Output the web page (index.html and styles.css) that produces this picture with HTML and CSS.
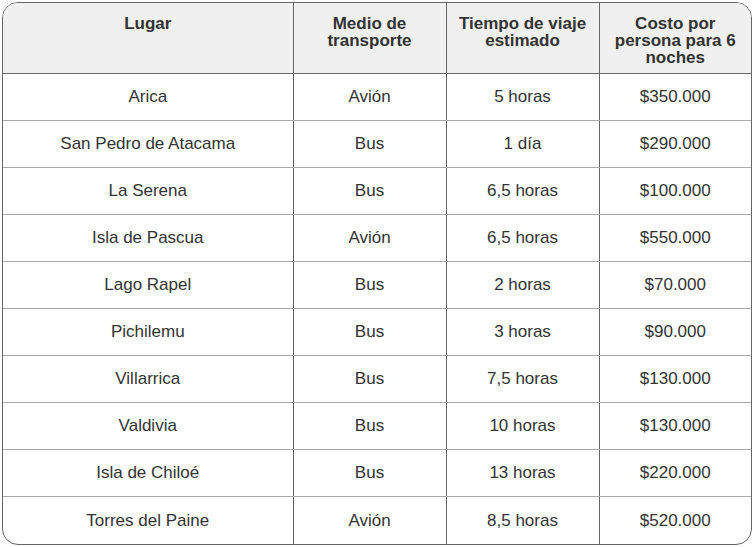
FILE: index.html
```html
<!DOCTYPE html>
<html lang="es">
<head>
<meta charset="utf-8">
<link rel="stylesheet" href="styles.css">
</head>
<body>
<div class="frame">
<table class="trips">
<colgroup>
<col class="c1"><col class="c2"><col class="c3"><col class="c4">
</colgroup>
<thead>
<tr><th>Lugar</th><th>Medio de<br>transporte</th><th>Tiempo de viaje<br>estimado</th><th>Costo por<br>persona para 6<br>noches</th></tr>
</thead>
<tbody>
<tr><td>Arica</td><td>Avión</td><td>5 horas</td><td>$350.000</td></tr>
<tr><td>San Pedro de Atacama</td><td>Bus</td><td>1 día</td><td>$290.000</td></tr>
<tr><td>La Serena</td><td>Bus</td><td>6,5 horas</td><td>$100.000</td></tr>
<tr><td>Isla de Pascua</td><td>Avión</td><td>6,5 horas</td><td>$550.000</td></tr>
<tr><td>Lago Rapel</td><td>Bus</td><td>2 horas</td><td>$70.000</td></tr>
<tr><td>Pichilemu</td><td>Bus</td><td>3 horas</td><td>$90.000</td></tr>
<tr><td>Villarrica</td><td>Bus</td><td>7,5 horas</td><td>$130.000</td></tr>
<tr><td>Valdivia</td><td>Bus</td><td>10 horas</td><td>$130.000</td></tr>
<tr><td>Isla de Chiloé</td><td>Bus</td><td>13 horas</td><td>$220.000</td></tr>
<tr class="last"><td>Torres del Paine</td><td>Avión</td><td>8,5 horas</td><td>$520.000</td></tr>
</tbody>
</table>
</div>
</body>
</html>
```
FILE: styles.css
```css
html, body { margin: 0; padding: 0; background: #fff; }
body { padding: 2px; font-family: "Liberation Sans", Arial, sans-serif; color: #333; }
.frame {
  width: 748px;
  height: 541px;
  border: 1px solid #666;
  border-radius: 16px;
  overflow: hidden;
}
.trips {
  width: 748px;
  height: 541px;
  border-collapse: collapse;
  table-layout: fixed;
  font-size: 17px;
}
.c1 { width: 290px; }
.c2 { width: 153px; }
.c3 { width: 153px; }
.c4 { width: 152px; }
.trips th, .trips td {
  text-align: center;
  padding: 0 2px;
  border-left: 1px solid #666;
}
.trips th:first-child, .trips td:first-child { border-left: none; }
.trips thead th {
  background: #f0f0f0;
  font-weight: bold;
  font-size: 17px;
  line-height: 17px;
  height: 70px;
  vertical-align: top;
  padding-top: 12px;
  padding-bottom: 0;
  box-sizing: border-box;
  border-bottom: 1px solid #666;
}
.trips tbody td {
  height: 47px;
  box-sizing: border-box;
  border-bottom: 1px solid #aaa;
  line-height: 17px;
  vertical-align: middle;
}
.trips tbody tr.last td { border-bottom: none; height: 48px; }
```
